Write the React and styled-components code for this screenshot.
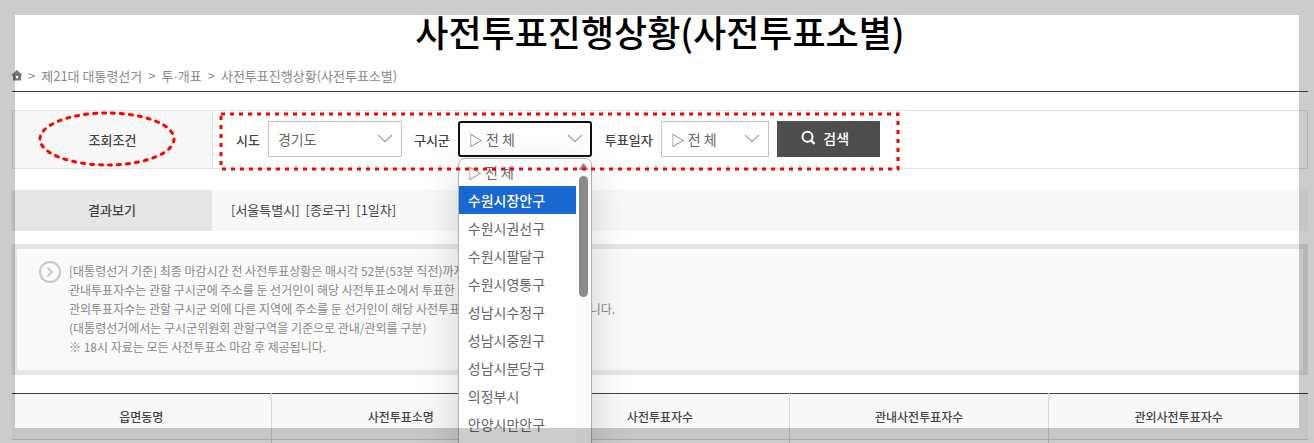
import React from "react";
import styled, { createGlobalStyle } from "styled-components";

const GlobalStyle = createGlobalStyle`
  *, *::before, *::after {
    box-sizing: border-box;
  }

  body {
    margin: 0;
    background: #fff;
    color: #444;
    font-family: "Noto Sans CJK KR", sans-serif;
    font-size: 13px;
  }
`;

const Page = styled.div`
  position: relative;
  height: 100vh;
  overflow: hidden;
  padding: 4px 6px 0 12px;
`;

const Frame = styled.div`
  position: fixed;
  inset: 0;
  z-index: 5;
  border: 15px solid rgba(0, 0, 0, 0.2);
  pointer-events: none;
`;

const Title = styled.h1`
  margin: 0 0 2px;
  font-size: 36px;
  line-height: 54px;
  font-weight: 500;
  text-align: center;
  color: #000;
`;

const Breadcrumb = styled.nav`
  display: flex;
  align-items: center;
  gap: 6px;
  height: 32px;
  border-bottom: 1px solid #444;
  color: #888;

  a {
    color: inherit;
    text-decoration: none;
  }
`;

const HomeLink = styled.a`
  display: flex;
`;

const MiddleDot = styled.span`
  font-family: "Liberation Sans", sans-serif;
`;

const SearchForm = styled.form`
  display: flex;
  margin-top: 18px;
  height: 59px;
  border: 1px solid #e4e4e4;
`;

const SearchTitle = styled.div`
  position: relative;
  display: flex;
  align-items: center;
  justify-content: center;
  width: 200px;
  border-right: 1px solid #e4e4e4;
  background: #f8f8f8;
  font-weight: 500;
`;

const EllipseMark = styled.svg`
  position: absolute;
  top: 0;
  left: 25px;
  z-index: 4;
  width: 140px;
  height: 58px;
  overflow: visible;
  pointer-events: none;
`;

const RectMark = styled.svg`
  position: absolute;
  top: 2px;
  left: 7px;
  z-index: 4;
  width: 680px;
  height: 59px;
  overflow: visible;
  pointer-events: none;
`;

const Fields = styled.div`
  position: relative;
  display: flex;
  align-items: center;
  padding: 0 0 1px 23px;
`;

const Label = styled.label`
  margin-right: 8px;
  font-weight: 500;
`;

const SelectBox = styled.div`
  position: relative;
  width: ${(props) => props.$width}px;
  margin-right: ${(props) => props.$gap}px;

  > svg {
    position: absolute;
    top: 13px;
    right: 9px;
    pointer-events: none;
  }
`;

const Select = styled.select`
  display: block;
  width: 100%;
  height: 36px;
  padding: 0 9px;
  appearance: none;
  border: ${(props) => (props.$open ? "2px solid #101010" : "1px solid #c4c4c4")};
  border-radius: ${(props) => (props.$open ? "3px" : "0")};
  outline: none;
  background: #fff;
  color: #666;
  font-family: inherit;
  font-size: 14px;
`;

const Dropdown = styled.div`
  position: absolute;
  top: 37px;
  left: 0;
  z-index: 3;
  display: flex;
  width: 100%;
  height: 340px;
  overflow: hidden;
  border: 1px solid #b0b0b0;
  border-radius: 7px;
  background: #fff;
  box-shadow: 0 14px 40px rgba(0, 0, 0, 0.16);
`;

const Options = styled.ul`
  flex: 1;
  margin: -1px 0 0;
  padding: 0;
  list-style: none;
`;

const Option = styled.li`
  height: 28px;
  padding-left: 9px;
  line-height: 28px;
  font-size: 14px;
  font-weight: ${(props) => (props.$selected ? 500 : 400)};
  color: ${(props) => (props.$selected ? "#fff" : "#666")};
  background: ${(props) => (props.$selected ? "#1967d2" : "transparent")};
`;

const Scrollbar = styled.div`
  display: flex;
  flex-direction: column;
  align-items: center;
  gap: 5px;
  width: 15px;
  padding-top: 4px;
  background: #fcfcfc;
`;

const Thumb = styled.div`
  width: 9px;
  height: 121px;
  border-radius: 5px;
  background: #8b8b8b;
`;

const SearchButton = styled.button`
  display: flex;
  align-items: center;
  justify-content: center;
  gap: 7px;
  width: 103px;
  height: 36px;
  padding: 0 6px 3px 0;
  border: 0;
  background: #4d4d4d;
  color: #fff;
  font-family: inherit;
  font-size: 14px;
  font-weight: 500;
`;

const Result = styled.section`
  display: flex;
  margin-top: 21px;
  height: 41px;
  line-height: 40px;
  background: #f8f8f8;
`;

const ResultTitle = styled.h2`
  width: 200px;
  margin: 0;
  background: #e6e6e6;
  font-size: 13px;
  font-weight: 500;
  text-align: center;
`;

const ResultText = styled.p`
  display: flex;
  gap: 6px;
  margin: 0;
  padding-left: 19px;
  font-size: 13px;
`;

const Notice = styled.section`
  display: flex;
  gap: 8px;
  margin-top: 13px;
  height: 131px;
  padding: 12px 22px;
  border: 5px solid #e6e6e6;
  background: #fafafa;
  color: #888;
`;

const NoticeText = styled.p`
  margin: 0;
  font-size: 12px;
  line-height: 19px;
`;

const Table = styled.table`
  width: 100%;
  margin-top: 18px;
  table-layout: fixed;
  border-collapse: collapse;
  border-top: 1px solid #444;

  th {
    height: 46px;
    padding: 0;
    border-bottom: 1px solid #d8d8d8;
    background: #f8f8f8;
    font-size: 12px;
    font-weight: 500;
  }

  td {
    height: 40px;
  }

  th + th,
  td + td {
    border-left: 1px solid #d8d8d8;
  }
`;

const provinces = ["경기도", "서울특별시"];

const districts = [
  "▷ 전 체",
  "수원시장안구",
  "수원시권선구",
  "수원시팔달구",
  "수원시영통구",
  "성남시수정구",
  "성남시중원구",
  "성남시분당구",
  "의정부시",
  "안양시만안구",
];

const results = ["[서울특별시]", "[종로구]", "[1일차]"];

const columns = [
  "읍면동명",
  "사전투표소명",
  "사전투표자수",
  "관내사전투표자수",
  "관외사전투표자수",
];

const Chevron = () => (
  <svg width="16" height="10" viewBox="0 0 16 10" fill="none" stroke="#aaa" strokeWidth="1.4" aria-hidden="true">
    <path d="M1 1 8 7.5 15 1" />
  </svg>
);

const HomeIcon = () => (
  <svg width="10" height="11" viewBox="0 0 10 11" fill="#777" aria-hidden="true">
    <path fillRule="evenodd" d="M5 0 0 4.6V5.5h1V10.5h8V5.5h1V4.6L5 0ZM4 6h2v2.2H4z" />
  </svg>
);

const SearchIcon = () => (
  <svg width="15" height="15" viewBox="0 0 15 15" fill="none" stroke="#fff" strokeWidth="2" aria-hidden="true">
    <circle cx="6.5" cy="6.8" r="5" />
    <path d="m10.2 10.5 3.3 3.3" strokeWidth="2.4" />
  </svg>
);

const NoticeIcon = () => (
  <svg width="22" height="22" viewBox="0 0 22 22" fill="none" stroke="#c8c8c8" strokeWidth="2" aria-hidden="true">
    <circle cx="11" cy="11" r="10" />
    <path d="m8.5 6.5 4.5 4.5-4.5 4.5" />
  </svg>
);

const App = () => {
  return (
    <>
      <GlobalStyle />
      <Page>
        <Title>사전투표진행상황(사전투표소별)</Title>
        <Breadcrumb>
          <HomeLink href="#home" aria-label="홈">
            <HomeIcon />
          </HomeLink>
          <span>&gt;</span>
          <a href="#election">제21대 대통령선거</a>
          <span>&gt;</span>
          <a href="#vote">
            투<MiddleDot>·</MiddleDot>개표
          </a>
          <span>&gt;</span>
          <a href="#progress">사전투표진행상황(사전투표소별)</a>
        </Breadcrumb>

        <SearchForm onSubmit={(e) => e.preventDefault()}>
          <SearchTitle>
            조회조건
            <EllipseMark aria-hidden="true">
              <ellipse
                cx="69"
                cy="28"
                rx="67"
                ry="26"
                fill="none"
                stroke="#f00"
                strokeWidth="3"
                strokeLinecap="round"
                strokeDasharray="3 6"
              />
            </EllipseMark>
          </SearchTitle>
          <Fields>
            <Label htmlFor="city">시도</Label>
            <SelectBox $width={134} $gap={12}>
              <Select id="city">
                {provinces.map((name) => (
                  <option key={name}>{name}</option>
                ))}
              </Select>
              <Chevron />
            </SelectBox>

            <Label htmlFor="town">구시군</Label>
            <SelectBox $width={134} $gap={13}>
              <Select id="town" $open>
                {districts.map((name) => (
                  <option key={name}>{name}</option>
                ))}
              </Select>
              <Chevron />
              <Dropdown>
                <Options role="listbox" aria-label="구시군">
                  {districts.map((name, i) => (
                    <Option key={name} role="option" aria-selected={i === 1} $selected={i === 1}>
                      {name}
                    </Option>
                  ))}
                </Options>
                <Scrollbar>
                  <svg width="9" height="8" viewBox="0 0 9 8" fill="#8b8b8b" aria-hidden="true">
                    <path d="M4.5 0 9 6v1H0V6z" />
                  </svg>
                  <Thumb />
                </Scrollbar>
              </Dropdown>
            </SelectBox>

            <Label htmlFor="date">투표일자</Label>
            <SelectBox $width={108} $gap={8}>
              <Select id="date">
                <option>▷ 전 체</option>
              </Select>
              <Chevron />
            </SelectBox>

            <SearchButton type="submit">
              <SearchIcon />
              검색
            </SearchButton>
            <RectMark aria-hidden="true">
              <rect
                x="1"
                y="1"
                width="677"
                height="55"
                fill="none"
                stroke="#f00"
                strokeWidth="3"
                strokeDasharray="4 5"
              />
            </RectMark>
          </Fields>
        </SearchForm>

        <Result>
          <ResultTitle>결과보기</ResultTitle>
          <ResultText>
            {results.map((text) => (
              <span key={text}>{text}</span>
            ))}
          </ResultText>
        </Result>

        <Notice>
          <NoticeIcon />
          <NoticeText>
            [대통령선거 기준] 최종 마감시간 전 사전투표상황은 매시각 52분(53분 직전)까지
            <br />
            관내투표자수는 관할 구시군에 주소를 둔 선거인이 해당 사전투표소에서 투표한 수
            <br />
            관외투표자수는 관할 구시군 외에 다른 지역에 주소를 둔 선거인이 해당 사전투표소에서 투표한 수를 의미합니다.
            <br />
            (대통령선거에서는 구시군위원회 관할구역을 기준으로 관내/관외를 구분)
            <br />※ 18시 자료는 모든 사전투표소 마감 후 제공됩니다.
          </NoticeText>
        </Notice>

        <Table>
          <thead>
            <tr>
              {columns.map((name) => (
                <th key={name} scope="col">
                  {name}
                </th>
              ))}
            </tr>
          </thead>
          <tbody>
            <tr>
              {columns.map((name) => (
                <td key={name} />
              ))}
            </tr>
          </tbody>
        </Table>
      </Page>
      <Frame />
    </>
  );
};

export default App;
